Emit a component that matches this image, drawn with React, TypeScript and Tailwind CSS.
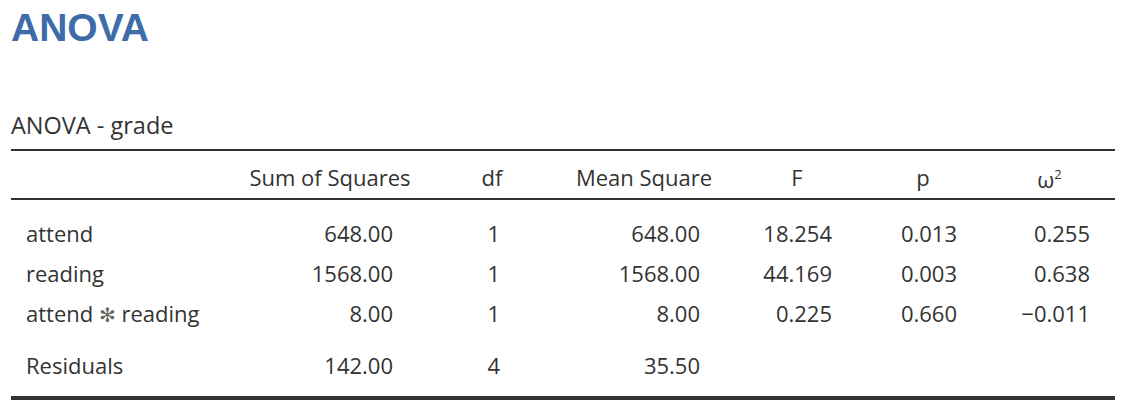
const rows = [
  { term: "attend", ss: "648.00", df: "1", ms: "648.00", f: "18.254", p: "0.013", w: "0.255" },
  { term: "reading", ss: "1568.00", df: "1", ms: "1568.00", f: "44.169", p: "0.003", w: "0.638" },
  { term: "attend ✻ reading", ss: "8.00", df: "1", ms: "8.00", f: "0.225", p: "0.660", w: "\u22120.011" },
];

const residuals = { term: "Residuals", ss: "142.00", df: "4", ms: "35.50", f: "", p: "", w: "" };

type Row = typeof residuals;

const cols = "grid grid-cols-[229px_180px_144px_160px_146px_106px_139px]";

const Term = ({ text }: { text: string }) => {
  // the interaction mark is drawn lighter in the original
  const parts = text.split("✻");
  if (parts.length === 1) return <>{text}</>;
  return (
    <>
      {parts[0]}
      <span className="text-[#666666] text-[20px]">✻</span>
      {parts[1]}
    </>
  );
};

const DataRow = ({ row }: { row: Row }) => (
  <div className={`${cols} h-[40px] leading-[40px]`}>
    <div className="pl-[15px] whitespace-nowrap">
      <Term text={row.term} />
    </div>
    <div className="text-right pr-[27px]">{row.ss}</div>
    <div className="text-right pr-[64px]">{row.df}</div>
    <div className="text-right pr-[24px]">{row.ms}</div>
    <div className="text-right pr-[38px]">{row.f}</div>
    <div className="text-right pr-[19px]">{row.p}</div>
    <div className="text-right pr-[25px]">{row.w}</div>
  </div>
);

export default function App() {
  return (
    <div className="w-[1134px] h-[416px] bg-white pl-[11px] text-[#333333] font-[370] font-['Open_Sans','DejaVu_Sans',sans-serif]">
      <h1 className="h-[56px] leading-[56px] text-[39px] font-bold text-[#3e6ca8] font-['Liberation_Sans',Arial,sans-serif]">
        ANOVA
      </h1>

      <div className="mt-[54px] w-[1104px] text-[22px]">
        <div className="h-[30px] leading-[30px] mb-[9px] text-[23.5px]">ANOVA - grade</div>

        <div className="border-t-2 border-b-2 border-[#333333]">
          <div className={`${cols} h-[47px] pt-[4px] items-center leading-[30px] text-center`}>
            <div />
            <div>Sum of Squares</div>
            <div>df</div>
            <div>Mean Square</div>
            <div>F</div>
            <div>p</div>
            <div className="pl-[8px]">
              ω<span className="text-[13px] align-[9px]">2</span>
            </div>
          </div>
        </div>

        <div className="pt-[13px] pb-[11px] border-b-4 border-[#333333]">
          {rows.map((r) => (
            <DataRow key={r.term} row={r} />
          ))}
          <div className="mt-[12px]">
            <DataRow row={residuals} />
          </div>
        </div>
      </div>
    </div>
  );
}
